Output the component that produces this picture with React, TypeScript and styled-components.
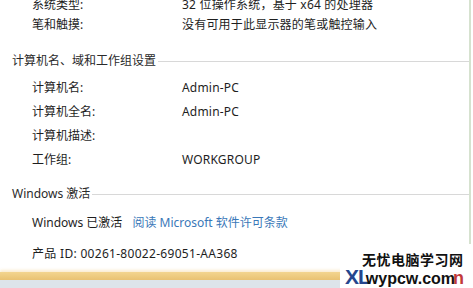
import React from "react";
import styled, { createGlobalStyle } from "styled-components";

const Global = createGlobalStyle`
  html, body { margin: 0; padding: 0; background: #ffffff; overflow: hidden; }
  * { box-sizing: border-box; }
`;

const Frame = styled.div`
  position: relative;
  width: 473px;
  height: 288px;
  overflow: hidden;
  display: flex;
  flex-direction: column;
  background: #ffffff;
  font-family: "Noto Sans", "Noto Sans CJK SC", sans-serif;
  font-size: 12px;
  color: #1e1e1e;
`;

const Panel = styled.div`
  flex: 1;
  display: flex;
  flex-direction: column;
  width: 471px;
  border-right: 2px solid #d6e2cf;
  overflow: hidden;
`;

const Group = styled.div<{ $gap?: number; $top?: number }>`
  display: flex;
  flex-direction: column;
  gap: ${(p) => p.$gap ?? 0}px;
  margin-top: ${(p) => p.$top ?? 0}px;
`;

const Row = styled.div<{ $h?: number }>`
  display: flex;
  align-items: center;
  height: ${(p) => p.$h ?? 24}px;
  padding-left: 32px;
  white-space: nowrap;
`;

const Label = styled.span`
  width: 150px;
  flex: none;
`;

const Value = styled.span`
  letter-spacing: 0.2px;
`;

const SectionHeader = styled.div<{ $top: number }>`
  display: flex;
  align-items: center;
  height: 20px;
  margin-top: ${(p) => p.$top}px;
  padding-left: 12px;
  white-space: nowrap;
  gap: 2px;
  color: #2a2a2a;
  &::after {
    content: "";
    flex: 1;
    height: 1px;
    margin-top: 2px;
    background: #d8d8d8;
  }
`;

const Link = styled.span`
  color: #3a78b8;
  margin-left: 10px;
`;

const ProductId = styled.span`
  letter-spacing: 0.3px;
`;

const Footer = styled.div`
  margin-top: auto;
  display: flex;
  flex-direction: column;
`;

const GoldBar = styled.div`
  height: 8px;
  background: linear-gradient(#f3d58f, #e9c272);
  box-shadow: 0 -2px 3px rgba(240, 200, 120, 0.35);
`;

const GrayBar = styled.div`
  height: 8px;
  background: #dde4ea;
`;

const Watermark = styled.div`
  position: absolute;
  right: 0;
  bottom: 0;
  width: 133px;
  height: 44px;
  background: #ffffff;
  display: flex;
  flex-direction: column;
  align-items: flex-start;
  padding: 8px 0 0 22px;
  line-height: 1;
`;

const WmTitle = styled.div`
  font-family: "Noto Sans CJK SC", sans-serif;
  font-weight: 700;
  font-size: 14px;
  letter-spacing: 0.5px;
  color: #111;
`;

const WmDomain = styled.div`
  display: flex;
  align-items: baseline;
  margin-left: -17px;
  font-family: "Liberation Sans", sans-serif;
  font-weight: 700;
`;

const WmBlue = styled.span`
  font-size: 21px;
  color: #25468e;
  letter-spacing: -1px;
`;

const WmBlack = styled.span`
  font-size: 16px;
  color: #111;
  margin-left: -4px;
`;

const WmRed = styled.span`
  font-size: 18px;
  color: #c23a3a;
  margin-left: -2px;
`;

export default function App() {
  return (
    <Frame>
      <Global />
      <Panel>
        <Group $top={-6}>
          <Row $h={20}>
            <Label>系统类型:</Label>
            <Value>32 位操作系统，基于 x64 的处理器</Value>
          </Row>
          <Row $h={20}>
            <Label>笔和触摸:</Label>
            <Value>没有可用于此显示器的笔或触控输入</Value>
          </Row>
        </Group>
        <SectionHeader $top={16}>计算机名、域和工作组设置</SectionHeader>
        <Group $top={5}>
          <Row>
            <Label>计算机名:</Label>
            <Value>Admin-PC</Value>
          </Row>
          <Row>
            <Label>计算机全名:</Label>
            <Value>Admin-PC</Value>
          </Row>
          <Row>
            <Label>计算机描述:</Label>
            <Value></Value>
          </Row>
          <Row>
            <Label>工作组:</Label>
            <Value>WORKGROUP</Value>
          </Row>
        </Group>
        <SectionHeader $top={12}>Windows 激活</SectionHeader>
        <Group $top={7} $gap={7}>
          <Row>
            <span>Windows 已激活</span>
            <Link>阅读 Microsoft 软件许可条款</Link>
          </Row>
          <Row>
            <ProductId>产品 ID: 00261-80022-69051-AA368</ProductId>
          </Row>
        </Group>
        <Footer>
          <GoldBar />
          <GrayBar />
        </Footer>
      </Panel>
      <Watermark>
        <WmTitle>无忧电脑学习网</WmTitle>
        <WmDomain>
          <WmBlue>XL</WmBlue>
          <WmBlack>wypcw.com</WmBlack>
          <WmRed>n</WmRed>
        </WmDomain>
      </Watermark>
    </Frame>
  );
}
